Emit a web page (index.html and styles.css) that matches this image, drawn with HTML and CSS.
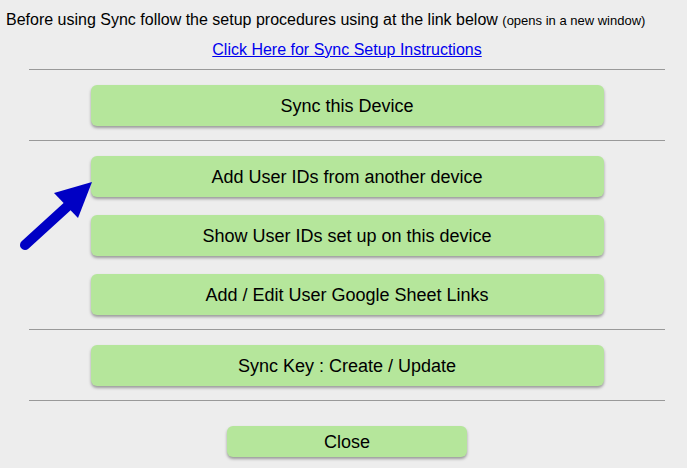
FILE: index.html
```html
<!DOCTYPE html>
<html>
<head>
<meta charset="utf-8">
<link rel="stylesheet" href="styles.css">
</head>
<body>
<div class="page">
  <p class="intro">Before using Sync follow the setup procedures using at the link below <span class="small">(opens in a new window)</span></p>
  <p class="linkrow"><a href="#">Click Here for Sync Setup Instructions</a></p>
  <hr class="rule">
  <div class="group">
    <button class="btn">Sync this Device</button>
  </div>
  <hr class="rule">
  <div class="group">
    <button class="btn">Add User IDs from another device</button>
    <button class="btn">Show User IDs set up on this device</button>
    <button class="btn">Add / Edit User Google Sheet Links</button>
  </div>
  <hr class="rule">
  <div class="group">
    <button class="btn">Sync Key : Create / Update</button>
  </div>
  <hr class="rule">
  <div class="group close-group">
    <button class="btn close">Close</button>
  </div>
</div>
<svg class="arrow" width="80" height="80" viewBox="0 0 80 80">
  <line x1="5" y1="75" x2="50" y2="34" stroke="#0000c4" stroke-width="10" stroke-linecap="round"/>
  <polygon points="72,12 34,23 58,48" fill="#0000c4"/>
</svg>
</body>
</html>
```

FILE: styles.css
```css
html, body {
  margin: 0;
  padding: 0;
  background: #ededed;
  overflow: hidden;
}
body {
  position: relative;
  width: 687px;
  height: 468px;
  font-family: "Liberation Sans", Arial, sans-serif;
  color: #000;
}
.page {
  width: 680px;
  margin-left: 7px;
  padding-top: 11px;
}
.intro {
  margin: 0 0 0 -1px;
  font-size: 16px;
  line-height: 18px;
  white-space: nowrap;
}
.small {
  font-size: 13px;
}
.linkrow {
  margin: 11px 0 0;
  text-align: center;
  font-size: 16px;
  line-height: 18px;
}
.linkrow a {
  color: #0000ee;
  text-decoration: underline;
}
.rule {
  width: 636px;
  margin: 10px auto 0;
  border: 0;
  border-top: 1px solid #999;
  height: 0;
}
.group {
  display: flex;
  flex-direction: column;
  align-items: center;
  gap: 18px;
  padding: 15px 0 14px;
}
.group + .rule {
  margin-top: 0;
}
.btn {
  width: 513px;
  height: 41px;
  border: 0;
  border-radius: 6px;
  background: #b5e69b;
  box-shadow: 0 2px 3px rgba(0, 0, 0, 0.35);
  font-family: "Liberation Sans", Arial, sans-serif;
  font-size: 18px;
  color: #000;
  padding: 2px 0 0;
}
.close-group {
  padding-top: 25px;
}
.close {
  width: 240px;
  height: 31px;
}
.arrow {
  position: absolute;
  left: 20px;
  top: 170px;
}
```
